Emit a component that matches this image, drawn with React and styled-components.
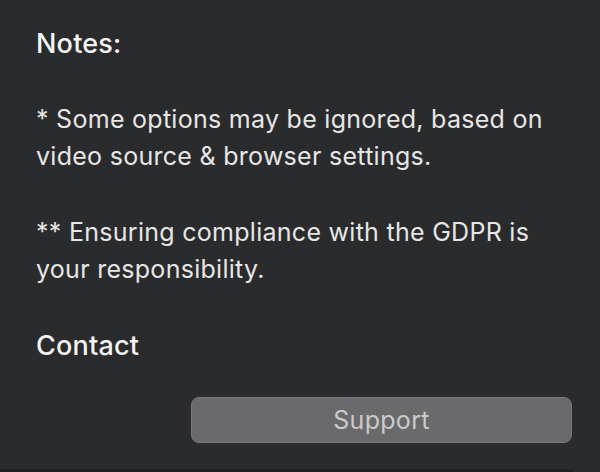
import React from 'react';
import styled, { createGlobalStyle } from 'styled-components';

const Global = createGlobalStyle`
  html, body {
    margin: 0;
    padding: 0;
    background: #2a2b2d;
  }
  body {
    font-family: Inter, "Liberation Sans", sans-serif;
  }
`;

const Panel = styled.div`
  width: 600px;
  height: 472px;
  box-sizing: border-box;
  background: #2a2b2d;
  display: flex;
  flex-direction: column;
`;

const Content = styled.div`
  flex: 1;
  padding: 28px 28px 0 36px;
  display: flex;
  flex-direction: column;
`;

const Heading = styled.div`
  color: #f4f4f4;
  font-size: 27px;
  font-weight: 500;
  line-height: 32px;
  letter-spacing: 0.2px;
  margin-bottom: ${p => p.$gap || 0}px;
`;

const Note = styled.p`
  margin: 0 0 ${p => p.$gap || 0}px;
  color: #e6e6e6;
  font-size: 25px;
  line-height: 37px;
  letter-spacing: 0.28px;
`;

const ButtonRow = styled.div`
  display: flex;
  justify-content: flex-end;
`;

const Button = styled.button`
  width: 381px;
  height: 46px;
  border-radius: 8px;
  background: #6a6a6c;
  border: 1px solid #77777a;
  color: #cacaca;
  font-family: Inter, "Liberation Sans", sans-serif;
  font-size: 25px;
  letter-spacing: 0.3px;
  cursor: pointer;
`;

const BottomEdge = styled.div`
  height: 3px;
  width: 573px;
  background: #1f2022;
`;

const App = () => {
  return (
    <Panel>
      <Global />
      <Content>
        <Heading $gap={41}>Notes:</Heading>
        <Note $gap={39}>* Some options may be ignored, based on video source &amp; browser settings.</Note>
        <Note $gap={42}>** Ensuring compliance with the GDPR is your responsibility.</Note>
        <Heading $gap={35}>Contact</Heading>
        <ButtonRow>
          <Button>Support</Button>
        </ButtonRow>
      </Content>
      <BottomEdge />
    </Panel>
  );
};

export default App;
